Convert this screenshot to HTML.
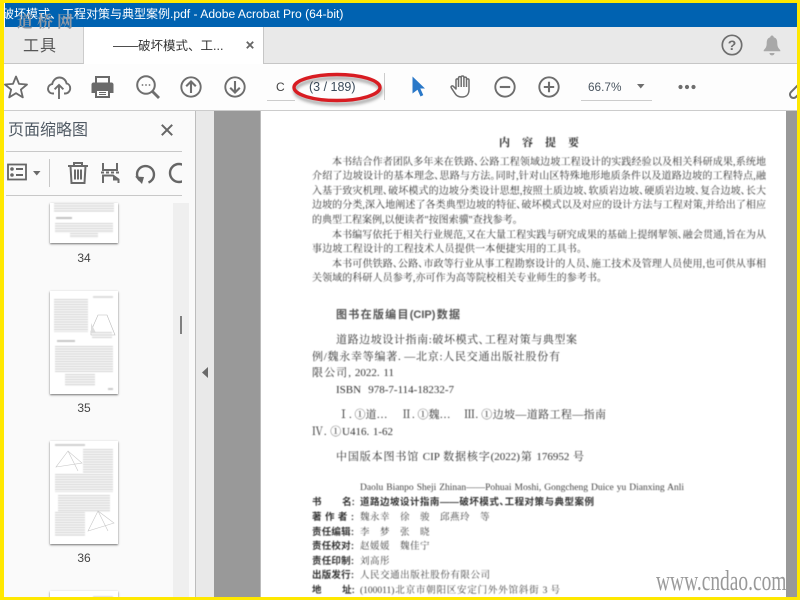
<!DOCTYPE html>
<html lang="zh"><head><meta charset="utf-8"><title>Acrobat</title>
<style>
html,body{margin:0;padding:0;background:#fff}
#r{position:relative;width:800px;height:600px;overflow:hidden;background:#fff;font-family:"Liberation Sans","Noto Sans CJK SC",sans-serif}
.a{position:absolute}
.y{position:absolute;background:#ffe800;z-index:50}
#page .l{position:absolute;white-space:nowrap;text-align:justify;text-align-last:justify;height:14px;line-height:14px;font-family:"Liberation Serif","Noto Serif CJK SC",serif;font-size:10px;color:#333;font-feature-settings:"palt"}
#page .b{font-family:"Liberation Sans","Noto Sans CJK SC",sans-serif;font-weight:700;color:#333}
#page .m{font-size:11px}
#page .v{text-align-last:left;text-align:left;font-size:9.5px;letter-spacing:.5px;color:#444}
#page .v span{margin-left:10px}
.t{position:absolute;background:#fff;left:50px;width:68px;box-shadow:0 1px 2px rgba(0,0,0,.55);overflow:hidden}
.t i{position:absolute;display:block;background:repeating-linear-gradient(#d6d6d6 0 1px,#f5f5f5 1px 2.5px);filter:blur(.4px)}
.n{position:absolute;left:50px;width:68px;text-align:center;font-size:12px;color:#444}
svg{position:absolute;overflow:visible}
</style></head><body><div id="r">

<!-- title bar -->
<div class="a" style="left:5px;top:3px;width:792px;height:24px;background:#0062b1;overflow:hidden;color:#fff;line-height:23px;white-space:nowrap">
<span class="a" style="left:-3px;top:0;font-size:12px">破坏模式、工程对策与典型案例</span><span class="a" style="left:165px;top:0;font-size:12.1px">.pdf - Adobe Acrobat Pro (64-bit)</span>
</div>
<div class="a" style="left:4px;top:3px;width:1px;height:24px;background:#fff"></div>

<!-- tab bar -->
<div class="a" style="left:4px;top:27px;width:793px;height:36px;background:#e9e9e9;border-bottom:1px solid #c6c6c6"></div>
<div class="a" style="left:4px;top:27px;width:79px;height:36px;background:#ebebeb;border-right:1px solid #ccc;border-bottom:1px solid #c6c6c6"></div>
<div class="a" style="left:23px;top:36px;font-size:16px;letter-spacing:1px;line-height:22px;color:#555">工具</div>
<div class="a" style="left:84px;top:27px;width:179px;height:37px;background:#fff;border-right:1px solid #c6c6c6"></div>
<div class="a" style="left:113px;top:37px;font-size:12.5px;line-height:18px;color:#333;white-space:nowrap">——破坏模式、工...</div>
<svg style="left:246px;top:41px" width="8" height="8"><path d="M.8.8 7.2 7.2M7.2.8.8 7.2" stroke="#666" stroke-width="1.8"/></svg>
<!-- help -->
<svg style="left:721px;top:34px" width="22" height="22"><circle cx="11" cy="11" r="9.7" fill="none" stroke="#6e6e6e" stroke-width="1.7"/><text x="11" y="16" text-anchor="middle" font-family="Liberation Sans" font-weight="700" font-size="14" fill="#6e6e6e">?</text></svg>
<!-- bell -->
<svg style="left:763px;top:35px" width="18" height="21"><path d="M9 0.5c1.1 0 1.7.8 1.7 1.8 3 .8 3.6 3.3 3.6 6 0 3.4 1 4.800 3 6.900v1H.700v-1c2-2.100 3-3.500 3-6.900 0-2.700.6-5.200 3.600-6 0-1 .6-1.800 1.700-1.800z" fill="#a8a8a8"/><path d="M6.500 18h5c0 1.500-1 2.400-2.500 2.400S6.500 19.500 6.500 18z" fill="#a8a8a8"/></svg>

<!-- toolbar -->
<div class="a" style="left:4px;top:64px;width:793px;height:46px;background:#fdfdfd;border-bottom:1px solid #ccc"></div>
<div class="a" style="left:4px;top:64px;width:793px;height:46px;overflow:hidden">
<svg style="left:0;top:11px" width="24" height="24"><path d="M12 1.500 15 8.900l8 .6-6.100 5.100 1.900 7.800L12 18.200 5.200 22.400l1.900-7.800L1 9.500l8-.6z" fill="none" stroke="#6b6b6b" stroke-width="1.800" stroke-linejoin="round"/></svg>
<svg style="left:43px;top:11px" width="24" height="24"><path d="M7 18.500H5.800C3 18.500 1 16.400 1 13.800c0-2.400 1.800-4.400 4.200-4.700C6 5.200 9 2.500 12.500 2.500c3.600 0 6.500 2.600 7.100 6 2.200.4 3.600 2.400 3.600 4.700 0 2.900-2.200 5.300-5 5.300H17" fill="none" stroke="#6e6e6e" stroke-width="1.900"/><path d="M12 24V10M7.600 14.300 12 10l4.400 4.300" fill="none" stroke="#6e6e6e" stroke-width="1.900"/></svg>
<svg style="left:87px;top:12px" width="23" height="22"><path d="M5 7V1h13v6" fill="none" stroke="#6a6a6a" stroke-width="2"/><path d="M2.500 6.500h18c1.100 0 2 .9 2 2V17h-4.200v-3.500H4.700V17H.500V8.500c0-1.100.9-2 2-2z" fill="#6a6a6a"/><path d="M5 14h13v7H5z" fill="#fff" stroke="#6a6a6a" stroke-width="2"/><path d="M8 16.500h7M8 18.500h7" stroke="#6a6a6a"/></svg>
<svg style="left:132px;top:11px" width="24" height="24"><circle cx="10" cy="10" r="8.800" fill="none" stroke="#6e6e6e" stroke-width="2"/><path d="M16.500 16.500 23 23" stroke="#6e6e6e" stroke-width="2.800"/><circle cx="6.500" cy="10" r=".9" fill="#6e6e6e"/><circle cx="10" cy="10" r=".9" fill="#6e6e6e"/><circle cx="13.500" cy="10" r=".9" fill="#6e6e6e"/></svg>
<svg style="left:176px;top:12px" width="22" height="22"><circle cx="11" cy="11" r="9.700" fill="none" stroke="#6e6e6e" stroke-width="1.900"/><path d="M11 17V5.500M6.200 10.300 11 5.500l4.800 4.800" fill="none" stroke="#6e6e6e" stroke-width="2.100"/></svg>
<svg style="left:220px;top:12px" width="22" height="22"><circle cx="11" cy="11" r="9.700" fill="none" stroke="#6e6e6e" stroke-width="1.900"/><path d="M11 5v11.500M6.200 11.700 11 16.500l4.800-4.800" fill="none" stroke="#6e6e6e" stroke-width="2.100"/></svg>
<div class="a" style="left:272px;top:14px;font-size:12px;line-height:18px;color:#444">C</div>
<div class="a" style="left:263px;top:36px;width:28px;height:1px;background:#ccc"></div>
<div class="a" style="left:380px;top:9px;width:1px;height:27px;background:#ccc"></div>
<div class="a" style="left:305px;top:14px;font-size:12.500px;line-height:18px;color:#3a4a5a;white-space:nowrap">(3 / 189)</div>
<svg style="left:408px;top:12px" width="14" height="21"><path d="M.500.500 13 12.500H8.300l3 6.600-2.800 1.400-3-6.800L.500 17.500z" fill="#2a78c8"/></svg>
<svg style="left:446px;top:11px" width="24" height="24"><path d="M5.800 19.500C4 17 2.700 15 1.300 12.800c-.8-1.300.8-2.600 2-1.500L6 14V5.200c0-1.800 2.500-1.800 2.500 0V3c0-1.900 2.700-1.900 2.700 0v-.7c0-1.800 2.700-1.800 2.700 0V3.500c0-1.800 2.600-1.800 2.600 0v1.700c0-1.700 2.500-1.700 2.500 0v9.300c0 4.700-2.600 7.500-6.800 7.500-3 0-4.900-.6-6.400-2.500zM8.500 5v7M11.200 3v9M13.900 3v9M16.500 4v8" fill="none" stroke="#6e6e6e" stroke-width="1.500" stroke-linejoin="round"/></svg>
<svg style="left:490px;top:12px" width="22" height="22"><circle cx="11" cy="11" r="9.700" fill="none" stroke="#6e6e6e" stroke-width="1.900"/><path d="M5.800 11h10.400" stroke="#6e6e6e" stroke-width="2.100"/></svg>
<svg style="left:534px;top:12px" width="22" height="22"><circle cx="11" cy="11" r="9.700" fill="none" stroke="#6e6e6e" stroke-width="1.900"/><path d="M5.800 11h10.400M11 5.800v10.400" stroke="#6e6e6e" stroke-width="2.100"/></svg>
<div class="a" style="left:584px;top:14px;font-size:11.800px;line-height:18px;color:#4a5560;white-space:nowrap">66.7%</div>
<svg style="left:633px;top:20px" width="8" height="5"><path d="M0 0h7.500L3.750 4.500z" fill="#6e6e6e"/></svg>
<div class="a" style="left:577px;top:36px;width:71px;height:1px;background:#ccc"></div>
<svg style="left:674px;top:20px" width="20" height="6"><circle cx="2.500" cy="3" r="2.100" fill="#6e6e6e"/><circle cx="9" cy="3" r="2.100" fill="#6e6e6e"/><circle cx="15.500" cy="3" r="2.100" fill="#6e6e6e"/></svg>
<svg style="left:784px;top:18px" width="16" height="18"><rect x="0" y="-3.500" width="17" height="7" rx="3.500" transform="translate(3 15) rotate(-45)" fill="none" stroke="#6e6e6e" stroke-width="2"/></svg>
</div>
<!-- red oval -->
<svg style="left:285px;top:66px" width="110" height="44"><defs><filter id="s" x="-20%" y="-40%" width="140%" height="180%"><feGaussianBlur stdDeviation="1.500"/></filter></defs>
<ellipse cx="53" cy="25" rx="43" ry="13" fill="none" stroke="#000" stroke-opacity=".38" stroke-width="3" filter="url(#s)"/>
<ellipse cx="52" cy="21.500" rx="43" ry="13" fill="none" stroke="#d81c22" stroke-width="3.400"/></svg>

<!-- sidebar -->
<div class="a" style="left:4px;top:111px;width:191px;height:486px;background:#fafafa;border-right:1px solid #bdbdbd"></div>
<div class="a" style="left:8px;top:120px;font-size:16px;line-height:21px;color:#505a64;white-space:nowrap">页面缩略图</div>
<svg style="left:161px;top:124px" width="12" height="12"><path d="M.800.800 11.200 11.200M11.200.800.800 11.200" stroke="#666" stroke-width="2"/></svg>
<div class="a" style="left:6px;top:151px;width:176px;height:1px;background:#c8c8c8"></div>
<div class="a" style="left:6px;top:195px;width:176px;height:1px;background:#c8c8c8"></div>
<div class="a" style="left:49px;top:159px;width:1px;height:28px;background:#c8c8c8"></div>
<svg style="left:7px;top:163px" width="20" height="18"><rect x="1" y="1.500" width="18" height="15" fill="none" stroke="#666" stroke-width="1.800"/><circle cx="5" cy="6" r="1.800" fill="#666"/><circle cx="5" cy="12" r="1.800" fill="#666"/><path d="M9 6h7M9 12h7" stroke="#666" stroke-width="2"/></svg>
<svg style="left:33px;top:171px" width="8" height="5"><path d="M0 0h7.500L3.750 4.500z" fill="#6a6a6a"/></svg>
<svg style="left:67px;top:161px" width="22" height="23"><path d="M1 5h20M7 5V2h8v3M3.500 5l1 17h13l1-17M8 8.500v10M11 8.500v10M14 8.500v10" fill="none" stroke="#6a6a6a" stroke-width="2"/></svg>
<svg style="left:101px;top:163px" width="20" height="21"><path d="M2 0v7h14V0M0 9.500h3M5 9.500h3M10 9.500h3M15 9.500h3" fill="none" stroke="#6a6a6a" stroke-width="2"/><path d="M2 20v-7.500h10l5.500 4V20" fill="none" stroke="#6a6a6a" stroke-width="2"/><path d="M12 13v4.500h5.500z" fill="#6a6a6a"/></svg>
<svg style="left:134px;top:163px" width="22" height="22"><path d="M6 17.500C2.500 14.500 2 9.500 5 6s8.500-4 12-1 4 8.500 1 12c-1 1.200-2.300 2-3.500 2.500" fill="none" stroke="#666" stroke-width="2.400"/><path d="M1 13.500 10 14l-2 7z" fill="#666"/></svg>
<div class="a" style="left:164px;top:160px;width:18px;height:26px;overflow:hidden"><svg style="left:0;top:0" width="18" height="26"><circle cx="15" cy="13" r="9" fill="none" stroke="#666" stroke-width="2.400"/></svg></div>

<!-- thumbnails -->
<div class="a" style="left:173px;top:203px;width:16px;height:394px;background:#efefef"></div>
<div class="a" style="left:180px;top:316px;width:2px;height:18px;background:#808080"></div>

<div class="t" style="top:203px;height:40px">
<i style="left:4px;right:4px;top:0;height:9px"></i>
<i style="left:6px;width:16px;top:14px;height:2px;background:#c4c4c4"></i>
<i style="left:5px;right:5px;top:20px;height:10px"></i>
<i style="left:20px;width:28px;top:30px;height:5px"></i>
</div>
<div class="n" style="top:251px">34</div>

<div class="t" style="top:291px;height:103px">
<i style="left:4px;width:34px;top:8px;height:33px"></i>
<i style="left:43px;width:20px;top:5px;height:2px;background:#ddd"></i>
<svg style="left:38px;top:20px" width="28" height="26"><path d="M3 20 10 4h9l8 20H3z" fill="none" stroke="#bbb" stroke-width=".6"/><path d="M3 12v10l6 2" fill="#ddd"/></svg>
<i style="left:42px;width:20px;top:41px;height:6px"></i>
<i style="left:7px;width:18px;top:49px;height:2px;background:#c8c8c8"></i>
<i style="left:5px;right:5px;top:55px;height:26px"></i>
<i style="left:15px;width:30px;top:83px;height:12px"></i>
<i style="left:58px;width:5px;top:97px;height:2px;background:#ccc"></i>
</div>
<div class="n" style="top:401px">35</div>

<div class="t" style="top:441px;height:103px">
<i style="left:5px;width:30px;top:3px;height:2px;background:#d0d0d0"></i>
<svg style="left:4px;top:8px" width="30" height="26"><path d="M14 2 2 18l26-4zM14 2l10 20" fill="none" stroke="#c8c8c8" stroke-width=".6"/></svg>
<i style="left:33px;width:30px;top:8px;height:24px"></i>
<i style="left:5px;right:5px;top:33px;height:18px"></i>
<i style="left:8px;right:8px;top:54px;height:17px"></i>
<i style="left:5px;width:30px;top:71px;height:24px"></i>
<svg style="left:36px;top:68px" width="30" height="26"><path d="M12 2 2 22l26-8zM12 2l10 20" fill="none" stroke="#c8c8c8" stroke-width=".6"/></svg>
</div>
<div class="n" style="top:551px">36</div>
<div class="t" style="top:591px;height:12px"><i style="left:43px;width:20px;top:5px;height:2px;background:#ddd"></i></div>

<!-- collapse strip -->
<div class="a" style="left:196px;top:111px;width:18px;height:486px;background:#e9e9e9"></div>
<svg style="left:202px;top:367px" width="6" height="11"><path d="M6 0v11L0 5.500z" fill="#6a6a6a"/></svg>
<div class="a" style="left:214px;top:111px;width:583px;height:486px;background:#999"></div>

<!-- page -->
<div class="a" style="left:260px;top:111px;width:526px;height:486px;background:#fff;border-left:1px solid #bbb;box-sizing:border-box"></div>
<div class="a" style="left:0;top:1px;width:800px;height:596px;overflow:hidden;filter:blur(.45px)" id="page">
<div class="l m" style="left:499px;top:135px;width:80px;font-weight:700">内容提要</div>
<div class="l" style="left:332px;top:155px;width:434px">本书结合作者团队多年来在铁路、公路工程领域边坡工程设计的实践经验以及相关科研成果,系统地</div>
<div class="l" style="left:312px;top:169px;width:454px">介绍了边坡设计的基本理念、思路与方法。同时,针对山区特殊地形地质条件以及道路边坡的工程特点,融</div>
<div class="l" style="left:312px;top:184px;width:454px">入基于致灾机理、破坏模式的边坡分类设计思想,按照土质边坡、软质岩边坡、硬质岩边坡、复合边坡、长大</div>
<div class="l" style="left:312px;top:198px;width:454px">边坡的分类,深入地阐述了各类典型边坡的特征、破坏模式以及对应的设计方法与工程对策,并给出了相应</div>
<div class="l" style="left:312px;top:213px;width:202px">的典型工程案例,以便读者"按图索骥"查找参考。</div>
<div class="l" style="left:332px;top:228px;width:434px">本书编写依托于相关行业规范,又在大量工程实践与研究成果的基础上提纲挈领、融会贯通,旨在为从</div>
<div class="l" style="left:312px;top:242px;width:270px">事边坡工程设计的工程技术人员提供一本便捷实用的工具书。</div>
<div class="l" style="left:332px;top:257px;width:434px">本书可供铁路、公路、市政等行业从事工程勘察设计的人员、施工技术及管理人员使用,也可供从事相</div>
<div class="l" style="left:312px;top:271px;width:290px">关领域的科研人员参考,亦可作为高等院校相关专业师生的参考书。</div>

<div class="l m b" style="left:336px;top:307px;width:124px;color:#555">图书在版编目(CIP)数据</div>
<div class="l m" style="left:336px;top:332px;width:241px">道路边坡设计指南:破坏模式、工程对策与典型案</div>
<div class="l m" style="left:312px;top:349px;width:248px">例/魏永幸等编著. —北京:人民交通出版社股份有</div>
<div class="l m" style="left:312px;top:365px;width:82px">限公司, 2022. 11</div>
<div class="l m" style="left:336px;top:382px;width:118px">ISBN 978-7-114-18232-7</div>
<div class="l m" style="left:338px;top:407px;width:48px">Ⅰ. ①道…</div>
<div class="l m" style="left:401px;top:407px;width:49px">Ⅱ. ①魏…</div>
<div class="l m" style="left:464px;top:407px;width:142px">Ⅲ. ①边坡—道路工程—指南</div>
<div class="l m" style="left:312px;top:424px;width:81px">Ⅳ. ①U416. 1-62</div>
<div class="l m" style="left:336px;top:449px;width:248px">中国版本图书馆 CIP 数据核字(2022)第 176952 号</div>
<div class="l" style="left:360px;top:480px;width:324px;font-size:9.500px;color:#444">Daolu Bianpo Sheji Zhinan——Pohuai Moshi, Gongcheng Duice yu Dianxing Anli</div>

<div class="l b" style="left:312px;top:495px;width:42px;font-size:9.500px;word-spacing:18px">书 名:</div>
<div class="l b" style="left:360px;top:495px;width:234px;font-size:9.500px">道路边坡设计指南——破坏模式、工程对策与典型案例</div>
<div class="l b" style="left:312px;top:510px;width:42px;font-size:9.500px">著作者:</div>
<div class="l v" style="left:360px;top:510px;width:140px">魏永幸<span>徐</span><span>骏</span><span>邱燕玲</span><span>等</span></div>
<div class="l b" style="left:312px;top:525px;width:42px;font-size:9.500px">责任编辑:</div>
<div class="l v" style="left:360px;top:525px;width:80px">李<span>梦</span><span>张</span><span>晓</span></div>
<div class="l b" style="left:312px;top:539px;width:42px;font-size:9.500px">责任校对:</div>
<div class="l v" style="left:360px;top:539px;width:80px">赵媛媛<span>魏佳宁</span></div>
<div class="l b" style="left:312px;top:554px;width:42px;font-size:9.500px">责任印制:</div>
<div class="l v" style="left:360px;top:554px;width:40px">刘高彤</div>
<div class="l b" style="left:312px;top:568px;width:42px;font-size:9.500px">出版发行:</div>
<div class="l" style="left:360px;top:568px;width:130px;font-size:9.500px;color:#444">人民交通出版社股份有限公司</div>
<div class="l b" style="left:312px;top:583px;width:42px;font-size:9.500px;word-spacing:18px">地 址:</div>
<div class="l" style="left:360px;top:583px;width:200px;font-size:9.500px;color:#444">(100011)北京市朝阳区安定门外外馆斜街 3 号</div>
</div>

<!-- watermarks -->
<div class="a" style="left:656px;top:566px;font-family:'Liberation Serif',serif;font-size:29px;line-height:30px;color:#999;transform:scaleX(.67);transform-origin:0 0;white-space:nowrap;z-index:20">www.cndao.com</div>
<div class="a" style="left:17px;top:11px;font-family:'Noto Serif CJK SC',serif;font-size:16px;line-height:20px;letter-spacing:4px;font-weight:700;color:#8f99a5;white-space:nowrap;z-index:20">道桥网</div>

<!-- yellow frame -->
<div class="y" style="left:0;top:0;width:800px;height:3px"></div>
<div class="y" style="left:0;top:0;width:4px;height:600px"></div>
<div class="y" style="left:797px;top:0;width:3px;height:600px"></div>
<div class="y" style="left:0;top:597px;width:800px;height:3px"></div>
</div></body></html>
